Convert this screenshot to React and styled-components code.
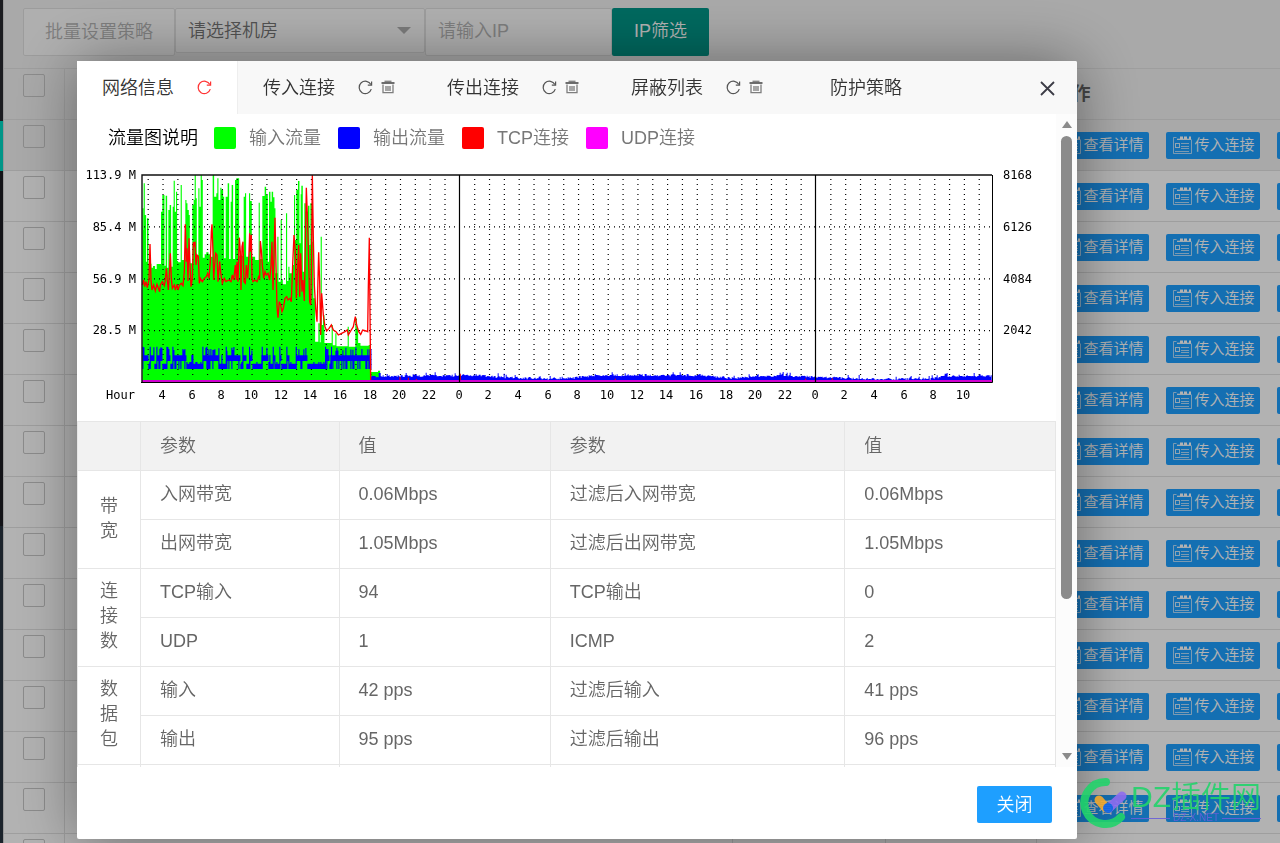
import React from "react";
import styled, { createGlobalStyle, css } from "styled-components";

const sans = `"Liberation Sans", "Noto Sans CJK SC", sans-serif`;

const GlobalStyle = createGlobalStyle`
  * { box-sizing: border-box; }
  html, body { margin: 0; height: 100%; }
  body { font: 350 18px/24px ${sans}; color: #666; overflow: hidden; background: #fff; }
  #root { height: 100%; }
  button, input, select { font: inherit; }
  table { border-collapse: collapse; border-spacing: 0; }
`;

/* ---------- page behind the dialog ---------- */

const Page = styled.div`
  display: flex;
  height: 100vh;
  overflow: hidden;
`;

const Sidebar = styled.nav`
  flex: none;
  width: 3px;
  display: flex;
  flex-direction: column;
  background: #28333e;
`;

const SideItem = styled.span`
  height: ${(p) => p.$h}px;
  background: ${(p) => p.$c};
`;

const Main = styled.main`
  flex: 1;
  min-width: 0;
  border-left: 1px solid #d8d8d8;
`;

const Toolbar = styled.form`
  display: flex;
  align-items: flex-start;
  height: 68px;
  padding: 8px 19px 0;
  background: #f2f2f2;
`;

const BatchButton = styled.button`
  width: 152px;
  height: 48px;
  border: 1px solid #e0e0e0;
  border-radius: 2px;
  background: #fbfbfb;
  color: #b4b4b4;
  padding: 0;
`;

const SelectWrap = styled.label`
  position: relative;
  width: 250px;
  &::after {
    content: "";
    position: absolute;
    right: 14px;
    top: 19px;
    border: 7px solid transparent;
    border-top-color: #b0b0b0;
    border-bottom: 0;
  }
`;

const Select = styled.select`
  appearance: none;
  display: block;
  width: 100%;
  height: 45px;
  padding: 0 12px;
  border: 1px solid #e0e0e0;
  border-radius: 2px;
  background: #fbfbfb;
  color: #757575;
`;

const IpInput = styled.input`
  width: 187px;
  height: 48px;
  padding: 0 12px 2px;
  border: 1px solid #e0e0e0;
  border-radius: 2px;
  background: #fbfbfb;
  &::placeholder { color: #b4b4b4; opacity: 1; }
`;

const FilterButton = styled.button`
  width: 97px;
  height: 48px;
  border: 0;
  border-radius: 2px;
  background: #009688;
  color: #fff;
  padding: 0 0 2px;
`;

const HostTable = styled.table`
  width: 100%;
  table-layout: fixed;
  th, td {
    height: 51px;
    padding: 0 18px;
    border: 1px solid #e2e2e2;
    text-align: left;
    white-space: nowrap;
    overflow: hidden;
  }
  th { background: #f2f2f2; font-weight: 700; }
  th:first-child, td:first-child { border-left: 0; padding: 0 19px; }
  th:last-child, td:last-child { border-right: 0; padding-right: 0; }
`;

const HostRow = styled.tr`
  background: ${(p) => (p.$active ? "#f2f2f2" : "#fff")};
`;

const Tick = styled.input`
  appearance: none;
  display: block;
  width: 22px;
  height: 23px;
  margin: 0 0 17px;
  border: 1px solid #c8c8c8;
  border-radius: 2px;
`;

const Actions = styled.div`
  display: flex;
  gap: 17px;
`;

const ActionButton = styled.button`
  flex: none;
  display: flex;
  align-items: center;
  gap: 3px;
  width: 94px;
  height: 27px;
  padding: 0 5px 0 7px;
  border: 0;
  border-radius: 2px;
  background: #1e9fff;
  color: #fff;
  font-size: 15px;
  line-height: 26px;
  white-space: nowrap;
  svg { flex: none; }
`;

/* ---------- dialog ---------- */

const Shade = styled.div`
  position: fixed;
  inset: 0;
  padding: 61px 203px 4px 77px;
  background: rgba(0, 0, 0, 0.3);
`;

const Dialog = styled.section`
  display: flex;
  flex-direction: column;
  height: 100%;
  border-radius: 2px;
  background: #fff;
  box-shadow: 1px 1px 62px rgba(0, 0, 0, 0.42);
`;

const TabBar = styled.header`
  flex: none;
  display: flex;
  height: 53px;
  border-radius: 2px 2px 0 0;
  background: #f8f8f8;
`;

const Tab = styled.div`
  display: flex;
  align-items: center;
  width: 184px;
  padding-left: ${(p) => (p.$wide ? 40 : 25)}px;
  color: #333;
  ${(p) => p.$active && css`
    width: 161px;
    background: #fff;
    border-right: 1px solid #eee;
  `}
`;

const PlainButton = styled.button`
  padding: 0;
  border: 0;
  background: none;
  color: inherit;
  display: flex;
`;

const TabIcons = styled.span`
  display: flex;
  gap: 8px;
  margin-left: 23px;
  color: ${(p) => (p.$active ? "#f33" : "#555")};
`;

const CloseIcon = styled(PlainButton)`
  align-items: center;
  margin-left: auto;
  padding: 2px 22px 0;
  color: #3c3c46;
`;

const Body = styled.div`
  flex: 1;
  min-height: 0;
  display: flex;
`;

const Content = styled.div`
  flex: 1;
  min-width: 0;
  overflow: hidden;
`;

const Legend = styled.div`
  display: flex;
  align-items: center;
  height: 51px;
  padding: 0 0 4px 31px;
  color: #000;
`;

const LegendTitle = styled.span`
  width: 106px;
`;

const LegendItem = styled.span`
  display: flex;
  align-items: center;
  gap: 13px;
  width: 124px;
  color: #777;
  &::before {
    content: "";
    width: 22px;
    height: 22px;
    border-radius: 2px;
    background: ${(p) => p.$c};
  }
`;

const Chart = styled.svg`
  display: block;
  margin-bottom: 11px;
  text { font: 400 12px "DejaVu Sans Mono", monospace; fill: #000; }
`;

const StatTable = styled.table`
  width: 100%;
  table-layout: fixed;
  th, td {
    height: 49px;
    padding: 0 19px 2px;
    border: 1px solid #e6e6e6;
    font-weight: inherit;
    text-align: left;
  }
  thead th { background: #f2f2f2; padding-bottom: 0; }
  tbody th { padding: 0 22px 2px; line-height: 25px; }
`;

const ScrollBar = styled.div`
  flex: none;
  display: flex;
  flex-direction: column;
  align-items: center;
  width: 21px;
  padding: 7px 0;
  background: #fcfcfc;
`;

const Arrow = styled.span`
  border: 5px solid transparent;
  ${(p) => (p.$up
    ? css`border-top: 0; border-bottom: 7px solid #8b8b8b;`
    : css`border-bottom: 0; border-top: 7px solid #8b8b8b; margin-top: auto;`)}
`;

const Thumb = styled.span`
  width: 11px;
  height: 72.5%;
  margin-top: 8px;
  border-radius: 6px;
  background: #8b8b8b;
`;

const Footer = styled.footer`
  flex: none;
  display: flex;
  justify-content: flex-end;
  height: 72px;
  padding: 19px 25px 0;
`;

const CloseButton = styled.button`
  width: 75px;
  height: 37px;
  border: 0;
  border-radius: 2px;
  background: #1e9fff;
  color: #fff;
  padding: 0;
`;

/* ---------- site mark in the corner ---------- */

const SiteMark = styled.div`
  position: fixed;
  right: 19px;
  bottom: 14px;
  display: flex;
  gap: 2px;
  height: 52px;
  opacity: 0.9;
`;

const MarkText = styled.div`
  display: flex;
  flex-direction: column;
  padding-top: 4px;
  color: #22d36b;
  font-size: 30px;
  line-height: 32px;
  white-space: nowrap;
`;

const MarkSub = styled.small`
  display: flex;
  align-items: center;
  gap: 3px;
  color: #6a5fd8;
  font-size: 10px;
  line-height: 10px;
  &::before, &::after {
    content: "";
    flex: 1;
    height: 1px;
    background: #6a5fd8;
  }
`;

/* ---------- icons ---------- */

const RefreshIcon = () => (
  <svg width="15" height="15" viewBox="0 0 15 15" fill="none" stroke="currentColor" strokeWidth="1.2" aria-hidden="true">
    <path d="M13.3 9.2A6.2 6.2 0 1 1 12.9 4.6" />
    <path d="M13.6 1.4V5.2H9.8" />
  </svg>
);

const TrashIcon = () => (
  <svg width="14" height="15" viewBox="0 0 14 15" fill="none" stroke="currentColor" aria-hidden="true">
    <path d="M0.5 3H13.5" strokeWidth="2" opacity=".85" />
    <path d="M3.5 1.4H10.5" strokeWidth="1.6" opacity=".7" />
    <path d="M2 4.5V12.6H12V4.5" strokeWidth="1.3" opacity=".75" />
    <path d="M5 6V11M7 6V11M9 6V11" strokeWidth="1.2" opacity=".85" />
  </svg>
);

const CardIcon = () => (
  <svg width="19" height="19" viewBox="0 0 19 19" fill="none" stroke="currentColor" aria-hidden="true">
    <path d="M3.5 1.5H0.5V17.5H18.5V3.5" opacity=".65" />
    <path d="M4 3.3H18" strokeWidth="1.2" />
    <path d="M7 1.8H10M11 1.8H14M16 1.8H18" strokeWidth="2.4" />
    <rect x="2.5" y="7.5" width="4" height="4" opacity=".8" />
    <path d="M8 7.5H16M8 10.5H16M8 12.5H16M2 15.5H16" opacity=".65" />
  </svg>
);

const CrossIcon = () => (
  <svg width="15" height="15" viewBox="0 0 15 15" stroke="currentColor" strokeWidth="1.8" aria-hidden="true">
    <path d="M1 1L14 14M14 1L1 14" />
  </svg>
);

/* ---------- traffic chart ---------- */

// Samples are kept at three units to the pixel: [from, to, top].
const inbound = [
  [196,199,130],[199,200,195],[200,203,55],[203,207,150],[207,210,290],[210,214,160],[214,223,296],[223,228,308],[228,234,303],[234,239,312],[239,252,297],
  [252,256,140],[256,262,90],[262,266,302],[266,270,92],[270,274,308],[274,278,135],[278,282,120],[282,287,305],[287,290,125],
  [290,293,47],[293,297,140],[297,300,80],[300,303,288],[303,311,292],[311,314,60],[314,325,285],[325,328,105],
  [328,331,115],[331,335,135],[335,338,150],[338,346,295],[346,350,120],[350,353,105],[353,356,30],[356,359,100],
  [359,364,270],[364,367,70],[367,371,125],[371,374,30],[374,377,45],[377,383,278],[383,388,268],[388,394,262],[394,400,268],[400,407,275],
  [407,411,30],[411,418,95],[418,421,85],[421,424,40],[424,430,105],[430,433,68],[433,438,75],[438,441,95],[441,446,280],
  [446,452,95],[452,456,55],[456,461,282],[461,464,110],[464,468,60],[468,474,282],[474,478,45],[478,486,40],[486,500,272],
  [500,504,95],[504,507,85],[507,516,275],[516,519,85],[519,524,108],[524,534,275],[534,545,285],[545,548,113],[548,556,282],
  [556,563,93],[563,567,65],[567,572,90],[572,576,290],[576,580,80],[580,584,110],[584,588,80],[588,592,97],[592,595,130],
  [595,601,325],[601,604,215],[604,611,350],[611,614,165],[614,617,345],[617,627,358],[627,630,145],[630,634,348],[634,637,305],
  [637,648,325],[648,651,300],[651,654,90],[654,658,225],[658,663,75],[663,667,48],[667,671,235],[671,673,88],[673,677,62],[677,682,320],
  [682,686,115],[686,693,140],[693,697,122],[697,700,240],[700,706,115],[706,709,230],[709,714,400],[714,724,530],[724,728,475],[728,731,532],
  [731,734,215],[734,738,480],[738,742,450],[742,764,534],[764,767,480],[767,775,541],[775,778,505],[778,812,544],[812,815,485],
  [815,835,545],[835,839,460],[839,843,490],[843,850,534],[850,875,542],[875,881,540],[881,903,621],[903,909,617],
];

const sessions = "196,360 200,345 203,365 207,350 211,368 216,345 219,237 222,345 225,375 230,360 235,378 240,358 248,380 250,360 256,350 262,362 265,345 268,310 271,345 274,375 277,330 280,265 283,340 286,370 292,360 295,375 300,358 303,375 308,360 313,355 318,362 322,320 325,178 328,290 330,250 333,348 336,220 339,300 342,365 346,340 349,232 352,240 354,230 357,300 360,270 364,275 367,355 370,340 376,350 382,340 388,335 392,325 396,340 400,290 403,200 405,178 408,260 410,345 413,300 416,265 420,270 423,350 428,290 432,330 436,355 442,340 447,350 455,345 462,350 466,330 470,345 475,300 478,345 480,290 483,350 487,218 490,260 492,375 495,245 498,230 501,350 505,355 508,300 512,340 515,290 518,205 520,260 523,210 525,340 528,350 534,345 540,350 545,335 548,340 550,228 553,255 556,300 560,340 564,320 568,330 573,325 578,345 582,300 585,230 588,375 591,270 594,158 597,300 600,425 603,458 607,410 611,420 615,440 619,430 624,400 629,395 633,405 639,400 643,410 647,300 651,210 655,260 658,400 661,330 665,240 668,395 671,265 675,380 678,345 682,408 685,240 688,68 691,150 694,250 698,410 701,420 703,340 706,30 709,220 712,360 716,430 720,470 723,340 725,262 728,350 731,510 734,385 739,450 744,485 749,498 756,490 763,480 769,495 777,500 784,510 794,505 804,500 811,495 814,510 821,498 829,485 835,455 839,480 845,500 851,508 857,495 867,498 872,500 874,365 877,218 879,440 881,647";

const sessionBlips = "M969 636V647M994 638V647M1018 642V647M1150 626V647M1615 641V647M2186 641V647M2266 640V647";

// Stretches in which outbound traffic runs at its upper level.
const busy = [[196,214],[218,232],[238,254],[268,278],[286,326],[376,426],[446,488],[496,506],[516,526],[554,574],[587,594],[607,613],[628,635],[656,690],[744,756],[762,881]];

const noise = (i) => {
  const v = Math.sin(i * 12.9898 + 4.1) * 43758.5453;
  return v - Math.floor(v);
};

const outboundBars = () => {
  const bars = [];
  for (let x = 196; x < 881; x += 3) {
    const up = busy.some(([a, b]) => x >= a && x < b);
    const n = noise(x);
    if (up) {
      const top = n > 0.68 ? 545 + noise(x + 1) * 12 : 571;
      const end = noise(x + 2) > 0.66 ? 612 : 588;
      bars.push([x, top, end]);
    } else {
      bars.push([x, n > 0.93 ? 570 : n > 0.7 ? 591 : 596, 612]);
    }
  }
  busy.forEach(([a]) => bars.push([a, 545, 612]));
  return bars;
};

const levels = [[881, 636], [1000, 634], [1200, 632], [1270, 638], [1420, 643], [1500, 638], [1560, 632], [1740, 632], [1880, 633], [1960, 641], [2040, 636], [2110, 633], [2240, 638], [2380, 643], [2560, 643], [2600, 634], [2744, 634]];

const tailPath = () => {
  let d = "M881 650";
  for (let x = 881; x < 2742; x += 3) {
    const k = levels.findIndex(([lx]) => lx > x);
    const [x0, y0] = levels[k - 1];
    const [x1, y1] = levels[k];
    const base = y0 + ((y1 - y0) * (x - x0)) / (x1 - x0);
    const y = Math.round(Math.min(646, base + 2 - noise(x) * (noise(x + 7) > 0.8 ? 14 : 6)));
    d += `V${y}H${x + 3}`;
  }
  return d + "V650Z";
};

const hourLabels = Array.from({ length: 28 }, (_, i) => ({ x: 85 + Math.round(((i * 2) * 1483) / 100), t: (4 + i * 2) % 24 }));
const hourLines = Array.from({ length: 57 }, (_, i) => i);

const TrafficChart = () => (
  <Chart width="978" height="245" viewBox="0 0 978 245" role="img" aria-label="流量图">
    <g transform="scale(0.33333)">
      <path fill="#0f0" d={inbound.map(([a, b, t]) => `M${a} ${t}H${b + 0.4}V650H${a}Z`).join("")} />
    </g>
    <g stroke="#000" strokeDasharray="1 4">
      {hourLines.map((i) => (i === 21 || i === 45 ? null : (
        <path key={i} d={`M${71.2 + i * 14.84} 14V214`} strokeWidth="1.2" />
      )))}
      <path d="M67 61.8H914M67 113.8H914M67 165.6H914" strokeWidth="1.2" />
    </g>
    <g transform="scale(0.33333)">
      <path fill="#00f" d={outboundBars().map(([x, t, e]) => `M${x} ${t}h3.4V${e}h-3.4Z`).join("")} />
      <path fill="#00f" d={tailPath()} />
      <path fill="none" d={sessionBlips} stroke="#f00" strokeWidth="3" />
      <polyline points={sessions} fill="none" stroke="#f00" strokeWidth="4" />
    </g>
    <path d="M65 216H915" stroke="#d000d0" strokeWidth="2" />
    <g fill="none" stroke="#000">
      <path d="M65 218V10H915" stroke="#111" strokeWidth="1.4" />
      <path d="M64 217.5H915.5V10" />
      <path d="M382.5 10V217M738.5 10V217" strokeWidth="1.2" />
    </g>
    <g textAnchor="end">
      <text x="59" y="14">113.9 M</text>
      <text x="59" y="66">85.4 M</text>
      <text x="59" y="118">56.9 M</text>
      <text x="59" y="169">28.5 M</text>
      <text x="58" y="234">Hour</text>
    </g>
    <text x="926" y="14">8168</text>
    <text x="926" y="66">6126</text>
    <text x="926" y="118">4084</text>
    <text x="926" y="169">2042</text>
    <g textAnchor="middle">
      {hourLabels.map(({ x, t }) => <text key={x} x={x} y="234">{t}</text>)}
    </g>
  </Chart>
);

/* ---------- content ---------- */

const groups = [
  { name: "带宽", rows: [["入网带宽", "0.06Mbps", "过滤后入网带宽", "0.06Mbps"], ["出网带宽", "1.05Mbps", "过滤后出网带宽", "1.05Mbps"]] },
  { name: "连接数", rows: [["TCP输入", "94", "TCP输出", "0"], ["UDP", "1", "ICMP", "2"]] },
  { name: "数据包", rows: [["输入", "42 pps", "过滤后输入", "41 pps"], ["输出", "95 pps", "过滤后输出", "96 pps"]] },
];

const tabs = ["传入连接", "传出连接", "屏蔽列表"];

const Column = styled.col`width: ${(p) => p.$w};`;

const Stats = () => (
  <StatTable>
    <colgroup>
      <Column $w="63px" />
      <Column $w="20.3%" />
      <Column $w="21.6%" />
      <Column $w="30.1%" />
      <col />
    </colgroup>
    <thead>
      <tr><th /><th>参数</th><th>值</th><th>参数</th><th>值</th></tr>
    </thead>
    <tbody>
      {groups.map((g) => g.rows.map((r, i) => (
        <tr key={r[0]}>
          {i === 0 && <th rowSpan={2} scope="rowgroup">{g.name}</th>}
          {r.map((c, k) => <td key={k}>{c}</td>)}
        </tr>
      )))}
      <tr><th /><td /><td /><td /><td /></tr>
    </tbody>
  </StatTable>
);

const HOSTS = 15;

export default function App() {
  return (
    <>
      <GlobalStyle />
      <Page>
        <Sidebar>
          <SideItem $h={121} $c="#28292f" />
          <SideItem $h={50} $c="#00d7c3" />
          <SideItem $h={355} $c="#1c1c22" />
        </Sidebar>
        <Main>
          <Toolbar>
            <BatchButton type="button" disabled>批量设置策略</BatchButton>
            <SelectWrap>
              <Select aria-label="机房"><option>请选择机房</option></Select>
            </SelectWrap>
            <IpInput aria-label="IP" placeholder="请输入IP" />
            <FilterButton type="button">IP筛选</FilterButton>
          </Toolbar>
          <HostTable>
            <colgroup>
              <Column $w="60px" />
              <col />
              <Column $w="153px" />
              <Column $w="151px" />
              <Column $w="244px" />
            </colgroup>
            <thead>
              <tr>
                <th><Tick type="checkbox" aria-label="全选" /></th>
                <th /><th /><th />
                <th>操作</th>
              </tr>
            </thead>
            <tbody>
              {Array.from({ length: HOSTS }, (_, i) => (
                <HostRow key={i} $active={i === 0}>
                  <td><Tick type="checkbox" aria-label={`选择 ${i + 1}`} /></td>
                  <td /><td /><td />
                  <td>
                    {i < HOSTS - 1 && (
                      <Actions>
                        <ActionButton type="button"><CardIcon />查看详情</ActionButton>
                        <ActionButton type="button"><CardIcon />传入连接</ActionButton>
                        <ActionButton type="button" aria-label="传出连接"><CardIcon /></ActionButton>
                      </Actions>
                    )}
                  </td>
                </HostRow>
              ))}
            </tbody>
          </HostTable>
        </Main>
      </Page>
      <Shade>
        <Dialog role="dialog" aria-label="网络信息">
          <TabBar>
            <Tab $active>
              <PlainButton type="button">网络信息</PlainButton>
              <TabIcons $active><PlainButton type="button" aria-label="刷新"><RefreshIcon /></PlainButton></TabIcons>
            </Tab>
            {tabs.map((t) => (
              <Tab key={t}>
                <PlainButton type="button">{t}</PlainButton>
                <TabIcons>
                  <PlainButton type="button" aria-label="刷新"><RefreshIcon /></PlainButton>
                  <PlainButton type="button" aria-label="清空"><TrashIcon /></PlainButton>
                </TabIcons>
              </Tab>
            ))}
            <Tab $wide><PlainButton type="button">防护策略</PlainButton></Tab>
            <CloseIcon type="button" aria-label="关闭"><CrossIcon /></CloseIcon>
          </TabBar>
          <Body>
            <Content>
              <Legend>
                <LegendTitle>流量图说明</LegendTitle>
                <LegendItem $c="#0f0">输入流量</LegendItem>
                <LegendItem $c="#00f">输出流量</LegendItem>
                <LegendItem $c="#f00">TCP连接</LegendItem>
                <LegendItem $c="#f0f">UDP连接</LegendItem>
              </Legend>
              <TrafficChart />
              <Stats />
            </Content>
            <ScrollBar aria-hidden="true">
              <Arrow $up />
              <Thumb />
              <Arrow />
            </ScrollBar>
          </Body>
          <Footer><CloseButton type="button">关闭</CloseButton></Footer>
        </Dialog>
      </Shade>
      <SiteMark>
        <svg width="49" height="52" viewBox="0 0 49 52" fill="none" strokeLinecap="round" aria-hidden="true">
          <path d="M26 5A21 21 0 1 0 41 40" stroke="#22d36b" strokeWidth="8" />
          <path d="M19 23L26 31" stroke="#f5a92c" strokeWidth="9" />
          <path d="M29 31L42 19" stroke="#8f6df0" strokeWidth="9" />
          <circle cx="28" cy="31" r="5" fill="#1467e8" />
        </svg>
        <MarkText>
          DZ插件网
          <MarkSub>DZ-X.NET</MarkSub>
        </MarkText>
      </SiteMark>
    </>
  );
}
